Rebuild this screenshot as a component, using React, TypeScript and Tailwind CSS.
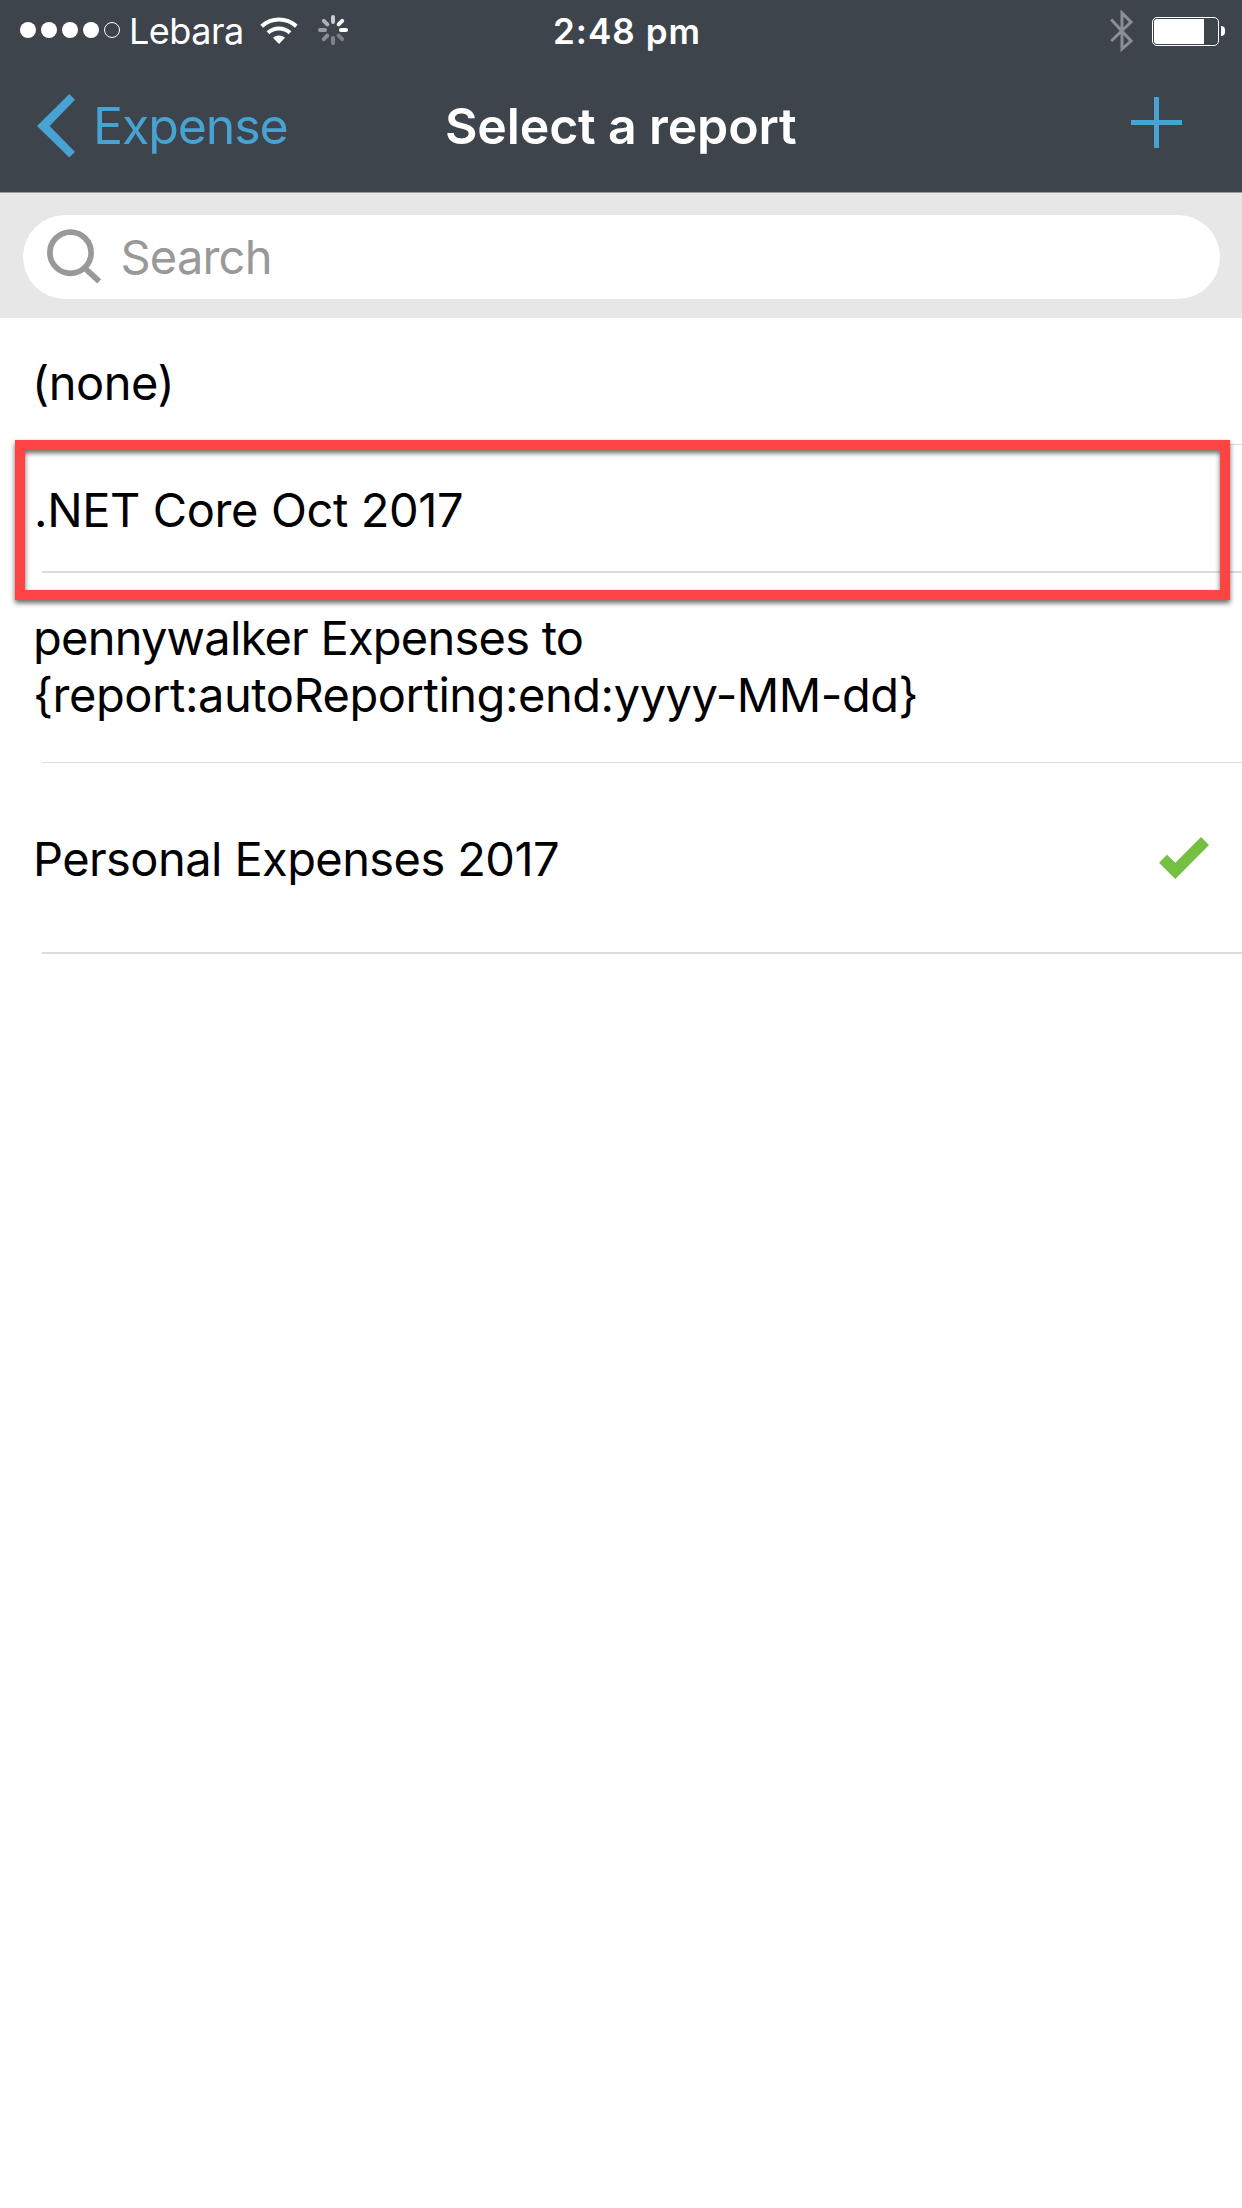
import React from "react";

function WifiIcon() {
  return (
    <svg className="h-7 w-[38px]" viewBox="0 0 38 28" fill="none" stroke="#fff" strokeWidth="4">
      <path d="M1.7 9.2A25.5 25.5 0 0 1 36.3 9.2" />
      <path d="M8 15.7A16.2 16.2 0 0 1 30 15.7" />
      <path d="M13 20.8A9 9 0 0 1 25 20.8L19 27Z" fill="#fff" stroke="none" />
    </svg>
  );
}

const spokes = [
  { angle: 0, opacity: 0.72 },
  { angle: 45, opacity: 0.95 },
  { angle: 90, opacity: 1 },
  { angle: 135, opacity: 0.32 },
  { angle: 180, opacity: 0.34 },
  { angle: 225, opacity: 0.4 },
  { angle: 270, opacity: 0.48 },
  { angle: 315, opacity: 0.58 },
];

function Spinner() {
  return (
    <svg className="size-[30px]" viewBox="-15 -15 30 30" stroke="#fff" strokeWidth="4" strokeLinecap="round">
      {spokes.map((s) => (
        <line key={s.angle} x1="0" y1="-13" x2="0" y2="-8" opacity={s.opacity} transform={`rotate(${s.angle})`} />
      ))}
    </svg>
  );
}

function StatusBar() {
  return (
    <div className="flex h-[62px] items-center text-white">
      <div className="flex w-[553px] items-center pl-5">
        <div className="flex gap-[5px] pb-[2px]">
          <span className="size-4 rounded-full bg-white" />
          <span className="size-4 rounded-full bg-white" />
          <span className="size-4 rounded-full bg-white" />
          <span className="size-4 rounded-full bg-white" />
          <span className="size-4 rounded-full border border-white" />
        </div>
        <span className="ml-[9px] w-[131px] text-[36px] leading-[62px] tracking-[-0.5px]">Lebara</span>
        <WifiIcon />
        <div className="ml-[20px] pb-[2px]">
          <Spinner />
        </div>
      </div>
      <span className="text-[35px] leading-[62px] font-semibold tracking-[1.03px]">2:48 pm</span>
      <div className="ml-auto flex items-center pr-[17px]">
        <svg className="mr-[18px] h-[42px] w-6" viewBox="0 0 24 42" fill="none" stroke="#8b8f93" strokeWidth="3">
          <path d="M1.2 9.5L21 31L12 39V3L21 12L1.2 31" />
        </svg>
        <div className="h-[29px] w-[67px] rounded-[5px] border border-white p-px">
          <div className="h-full w-[50px] rounded-l-[3px] bg-white" />
        </div>
        <div className="ml-[2px] h-[10px] w-1 rounded-r-full bg-white" />
      </div>
    </div>
  );
}

function NavBar() {
  return (
    <div className="flex h-[130px] items-center pb-[2px] text-[50px] leading-[60px]">
      <div className="flex w-[445px] items-center pl-[37px] text-[#48a2d2]">
        <svg className="h-16 w-[38px]" viewBox="0 0 38 64" fill="currentColor">
          <path d="M0 32L32.3 0L38 5.8L12.6 32L38 58L32.3 63.5Z" />
        </svg>
        <span className="ml-[18px] tracking-[-1.1px]">Expense</span>
      </div>
      <h1 className="font-semibold tracking-[-0.15px] text-white">Select a report</h1>
      <svg className="mr-[60px] mb-[7px] ml-auto size-[51px]" viewBox="0 0 51 51" fill="#48a2d2">
        <path d="M23 0h5v23h23v5H28v23h-5V28H0v-5h23z" />
      </svg>
    </div>
  );
}

function SearchBar() {
  return (
    <div className="h-[126px] border-t border-[#a09c9e] bg-[#e7e7e7] pt-[21.5px] pr-[22.5px] pl-[22.5px]">
      <div className="flex h-[84px] items-center rounded-[42px] bg-white pl-[23px]">
        <svg className="size-[56px]" viewBox="0 0 56 56" fill="none" stroke="#999" strokeWidth="5.7">
          <circle cx="24.5" cy="23.7" r="20.6" />
          <path d="M38.5 38.8L53.2 52.3" />
        </svg>
        <span className="mt-[1px] ml-[19px] text-[47px] leading-[60px] tracking-[-0.8px] text-[#999]">Search</span>
      </div>
    </div>
  );
}

function Divider({ thick = false }: { thick?: boolean }) {
  return <div className={thick ? "ml-[42px] h-[2px] bg-[#dcdcdc]" : "ml-[42px] h-px bg-[#dcdcdc]"} />;
}

export default function App() {
  return (
    <div className="h-[2208px] w-[1242px] overflow-hidden bg-white font-['Inter','Liberation_Sans',sans-serif]">
      <header className="bg-[#3d444b]">
        <StatusBar />
        <NavBar />
      </header>
      <SearchBar />
      <ul className="text-[47px] leading-[57px] text-black">
        <li>
          <div className="flex h-[126px] items-center pt-[2px] pl-[32px] tracking-[-0.45px]">(none)</div>
          <Divider />
        </li>
        <li className="relative">
          <div className="flex h-[126px] items-center pt-[3px] pl-[34px] tracking-[-0.39px]">.NET Core Oct 2017</div>
          <Divider thick />
          <div className="absolute -top-[5px] left-[15px] h-[160px] w-[1215px] border-[10px] border-[#ff4444] shadow-[0_3px_5px_rgba(0,0,0,0.6)]">
            <div className="size-full shadow-[inset_0_3px_5px_rgba(0,0,0,0.6)]" />
          </div>
        </li>
        <li>
          <div className="flex h-[189px] flex-col pt-[36px] pl-[33px]">
            <span className="tracking-[-0.77px]">pennywalker Expenses to</span>
            <span className="tracking-[-0.46px]">{"{report:autoReporting:end:yyyy-MM-dd}"}</span>
          </div>
          <Divider />
        </li>
        <li>
          <div className="flex h-[189px] items-center justify-between pt-px pr-[33px] pl-[33px] tracking-[-0.58px]">
            <span>Personal Expenses 2017</span>
            <svg className="mb-px h-[42px] w-[50px]" viewBox="0 0 50 42" fill="#75c043">
              <path d="M0 25.7L8 17.7L16.3 25.7L42 0L50 8L16.3 42Z" />
            </svg>
          </div>
          <Divider thick />
        </li>
      </ul>
    </div>
  );
}
